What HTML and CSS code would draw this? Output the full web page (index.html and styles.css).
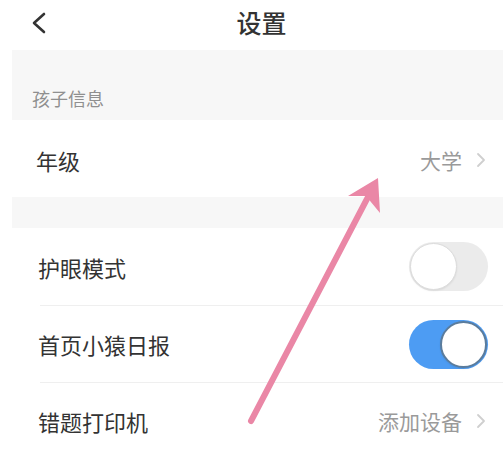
FILE: index.html
```html
<!DOCTYPE html>
<html lang="zh-CN">
<head>
<meta charset="utf-8">
<title>设置</title>
<link rel="stylesheet" href="styles.css">
</head>
<body>
<div class="page">
  <header class="header">
    <span class="back">
      <svg width="16" height="22" viewBox="0 0 16 22"><path d="M13 2 L3 11 L13 20" fill="none" stroke="#333" stroke-width="2.6" stroke-linecap="round" stroke-linejoin="round"/></svg>
    </span>
    <h1 class="title">设置</h1>
    <span class="spacer"></span>
  </header>
  <main class="screen">
    <div class="section-label">孩子信息</div>
    <div class="row row-first">
      <span class="label">年级</span>
      <span class="value">大学<svg class="chev" width="10" height="16" viewBox="0 0 10 16"><path d="M2 2 L8 8 L2 14" fill="none" stroke="#cfcfcf" stroke-width="1.8" stroke-linecap="round" stroke-linejoin="round"/></svg></span>
    </div>
    <div class="gap"></div>
    <div class="group">
      <div class="row">
        <span class="label">护眼模式</span>
        <span class="switch"><span class="knob"></span></span>
      </div>
      <div class="row">
        <span class="label">首页小猿日报</span>
        <span class="switch on"><span class="knob"></span></span>
      </div>
      <div class="row">
        <span class="label">错题打印机</span>
        <span class="value">添加设备<svg class="chev" width="10" height="16" viewBox="0 0 10 16"><path d="M2 2 L8 8 L2 14" fill="none" stroke="#cfcfcf" stroke-width="1.8" stroke-linecap="round" stroke-linejoin="round"/></svg></span>
      </div>
    </div>
  </main>
  <svg class="arrow" width="503" height="452" viewBox="0 0 503 452">
    <line x1="251" y1="421" x2="368" y2="197" stroke="#ea87a6" stroke-width="6" stroke-linecap="round"/>
    <polygon points="378,178 348,196 366,196 380,213" fill="#ea87a6"/>
  </svg>
</div>
</body>
</html>
```

FILE: styles.css
```css
html, body {
  margin: 0;
  padding: 0;
  background: #fff;
}
body {
  font-family: "Noto Sans CJK SC", "Noto Sans", sans-serif;
  color: #333;
}
.page {
  position: relative;
  width: 503px;
  height: 452px;
  overflow: hidden;
}
.header {
  height: 50px;
  display: grid;
  grid-template-columns: 1fr auto 1fr;
  align-items: center;
}
.back {
  padding-left: 31px;
  display: flex;
  align-items: center;
  margin-top: -5px;
}
.title {
  margin: 0;
  font-size: 25px;
  font-weight: 500;
  color: #333;
  line-height: 1;
  margin-top: -6px;
  padding-left: 20px;
}
.screen {
  margin-left: 12px;
}
.section-label {
  height: 70px;
  box-sizing: border-box;
  background: #f7f7f7;
  padding: 34px 0 0 20px;
  font-size: 18px;
  line-height: 28px;
  color: #8f8f8f;
}
.row {
  height: 77px;
  box-sizing: border-box;
  display: flex;
  align-items: center;
  justify-content: space-between;
  padding-right: 15px;
  margin-left: 26px;
}
.row-first {
  margin-left: 0;
  padding-left: 24px;
  padding-top: 2px;
}
.group .row + .row {
  border-top: 1px solid #efefef;
  margin-left: 28px;
}
.label {
  font-size: 22px;
  line-height: 1;
  color: #333;
}
.group .row + .row .label {
  margin-left: -2px;
}
.value {
  display: flex;
  align-items: center;
  font-size: 21px;
  color: #9a9a9a;
}
.chev {
  margin-left: 14px;
  margin-right: 2px;
}
.gap {
  height: 31px;
  background: #f7f7f7;
}
.switch {
  width: 79px;
  height: 49px;
  border-radius: 25px;
  background: #ebebeb;
  display: flex;
  align-items: center;
  box-sizing: border-box;
  padding: 1px;
}
.knob {
  width: 47px;
  height: 47px;
  border-radius: 50%;
  background: #fff;
  box-sizing: border-box;
  border: 1px solid #dcdcdc;
  box-shadow: 0 1px 2px rgba(0,0,0,0.08);
}
.switch.on {
  background: #4d9cf3;
  justify-content: flex-end;
}
.switch.on .knob {
  border: 2px solid #5b7c9c;
}
.arrow {
  position: absolute;
  left: 0;
  top: 0;
  pointer-events: none;
}
```
